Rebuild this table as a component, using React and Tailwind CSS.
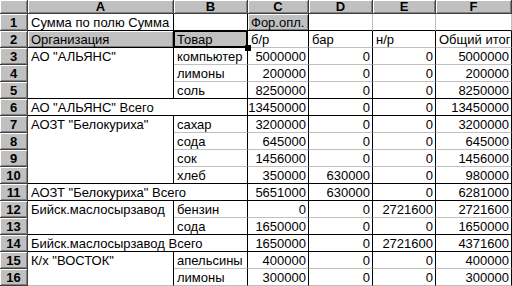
import React from "react";

const font = { fontFamily: '"Liberation Sans", Arial, sans-serif' };

function Hdr({ children, className = "" }) {
  return (
    <div
      className={`flex items-center justify-center bg-[#c0c0c0] border-r border-b border-[#404040] shadow-[inset_1px_1px_0_#ffffff,inset_-1px_-1px_0_#808080] text-[13px] font-bold leading-none text-black ${className}`}
    >
      {children}
    </div>
  );
}

function Cell({ children, right = false, r = "g", b = "g", className = "" }) {
  const rc = r === "k" ? "border-r-black" : "border-r-[#c0c0c0]";
  const bc = b === "k" ? "border-b-black" : "border-b-[#c0c0c0]";
  return (
    <div
      className={`flex items-end overflow-hidden whitespace-nowrap border-r border-b ${rc} ${bc} bg-white text-[13px] leading-[15px] text-black ${
        right ? "justify-end pr-[2px]" : "pl-[3px]"
      } ${className}`}
    >
      {children}
    </div>
  );
}

function Btn({ children, className = "" }) {
  return (
    <div
      className={`flex items-end whitespace-nowrap bg-[#c0c0c0] border-r border-b border-r-black border-b-black shadow-[inset_1px_1px_0_#ffffff,inset_-1px_-1px_0_#808080] pl-[3px] text-[13px] leading-[15px] text-black ${className}`}
    >
      {children}
    </div>
  );
}

const groups = [
  {
    org: 'АО "АЛЬЯНС"',
    items: [
      ["компьютер", "5000000", "0", "0", "5000000"],
      ["лимоны", "200000", "0", "0", "200000"],
      ["соль", "8250000", "0", "0", "8250000"],
    ],
    total: ['АО "АЛЬЯНС" Всего', "13450000", "0", "0", "13450000"],
  },
  {
    org: 'АОЗТ "Белокуриха"',
    items: [
      ["сахар", "3200000", "0", "0", "3200000"],
      ["сода", "645000", "0", "0", "645000"],
      ["сок", "1456000", "0", "0", "1456000"],
      ["хлеб", "350000", "630000", "0", "980000"],
    ],
    total: ['АОЗТ "Белокуриха" Всего', "5651000", "630000", "0", "6281000"],
  },
  {
    org: "Бийск.маслосырзавод",
    items: [
      ["бензин", "0", "0", "2721600", "2721600"],
      ["сода", "1650000", "0", "0", "1650000"],
    ],
    total: ["Бийск.маслосырзавод Всего", "1650000", "0", "2721600", "4371600"],
  },
  {
    org: 'К/х "ВОСТОК"',
    items: [
      ["апельсины", "400000", "0", "0", "400000"],
      ["лимоны", "300000", "0", "0", "300000"],
    ],
    total: null,
  },
];

const spanCls = { 2: "row-span-2", 3: "row-span-3", 4: "row-span-4" };

export default function App() {
  const cells = [];
  let row = 3;
  groups.forEach((g) => {
    const n = g.items.length;
    g.items.forEach((it, i) => {
      const last = i === n - 1;
      const b = last && g.total ? "k" : "g";
      cells.push(<Hdr key={`h${row}`}>{row}</Hdr>);
      if (i === 0) {
        cells.push(
          <Cell key={`a${row}`} r="k" b={g.total ? "k" : "g"} className={`${spanCls[n]} !items-start pt-[1px]`}>
            {g.org}
          </Cell>
        );
      }
      cells.push(
        <Cell key={`b${row}`} r="k" b={b}>
          {it[0]}
        </Cell>
      );
      for (let c = 1; c < 5; c++) {
        cells.push(
          <Cell key={`c${row}_${c}`} right r="k" b={b}>
            {it[c]}
          </Cell>
        );
      }
      row++;
    });
    if (g.total) {
      cells.push(<Hdr key={`h${row}`}>{row}</Hdr>);
      cells.push(
        <Cell key={`t${row}`} r="k" b="k" className="col-span-2">
          {g.total[0]}
        </Cell>
      );
      for (let c = 1; c < 5; c++) {
        cells.push(
          <Cell key={`t${row}_${c}`} right r="k" b="k">
            {g.total[c]}
          </Cell>
        );
      }
      row++;
    }
  });

  return (
    <div className="h-[286px] w-[512px] overflow-hidden bg-white" style={font}>
      <div className="grid grid-cols-[28px_146px_74px_61px_64px_63px_76px] grid-rows-[14px_repeat(16,17px)]">
        <Hdr />
        {["A", "B", "C", "D", "E", "F"].map((l) => (
          <Hdr key={l}>{l}</Hdr>
        ))}

        <Hdr>1</Hdr>
        <Cell r="k" b="k">Сумма по полю Сумма</Cell>
        <Cell b="k" r="k"></Cell>
        <Btn>Фор.опл.</Btn>
        <Cell b="k"></Cell>
        <Cell b="k"></Cell>
        <Cell b="k"></Cell>

        <Hdr>2</Hdr>
        <Btn>Организация</Btn>
        <div className="relative">
          <Btn className="h-full">Товар</Btn>
          <div className="pointer-events-none absolute -left-[1px] -top-[1px] right-0 bottom-0 border-2 border-black" />
          <div className="absolute -right-[3px] -bottom-[3px] h-[6px] w-[6px] bg-black" />
        </div>
        <Cell r="k">б/р</Cell>
        <Cell r="k">бар</Cell>
        <Cell r="k">н/р</Cell>
        <Cell r="k">Общий итог</Cell>

        {cells}
      </div>
    </div>
  );
}
